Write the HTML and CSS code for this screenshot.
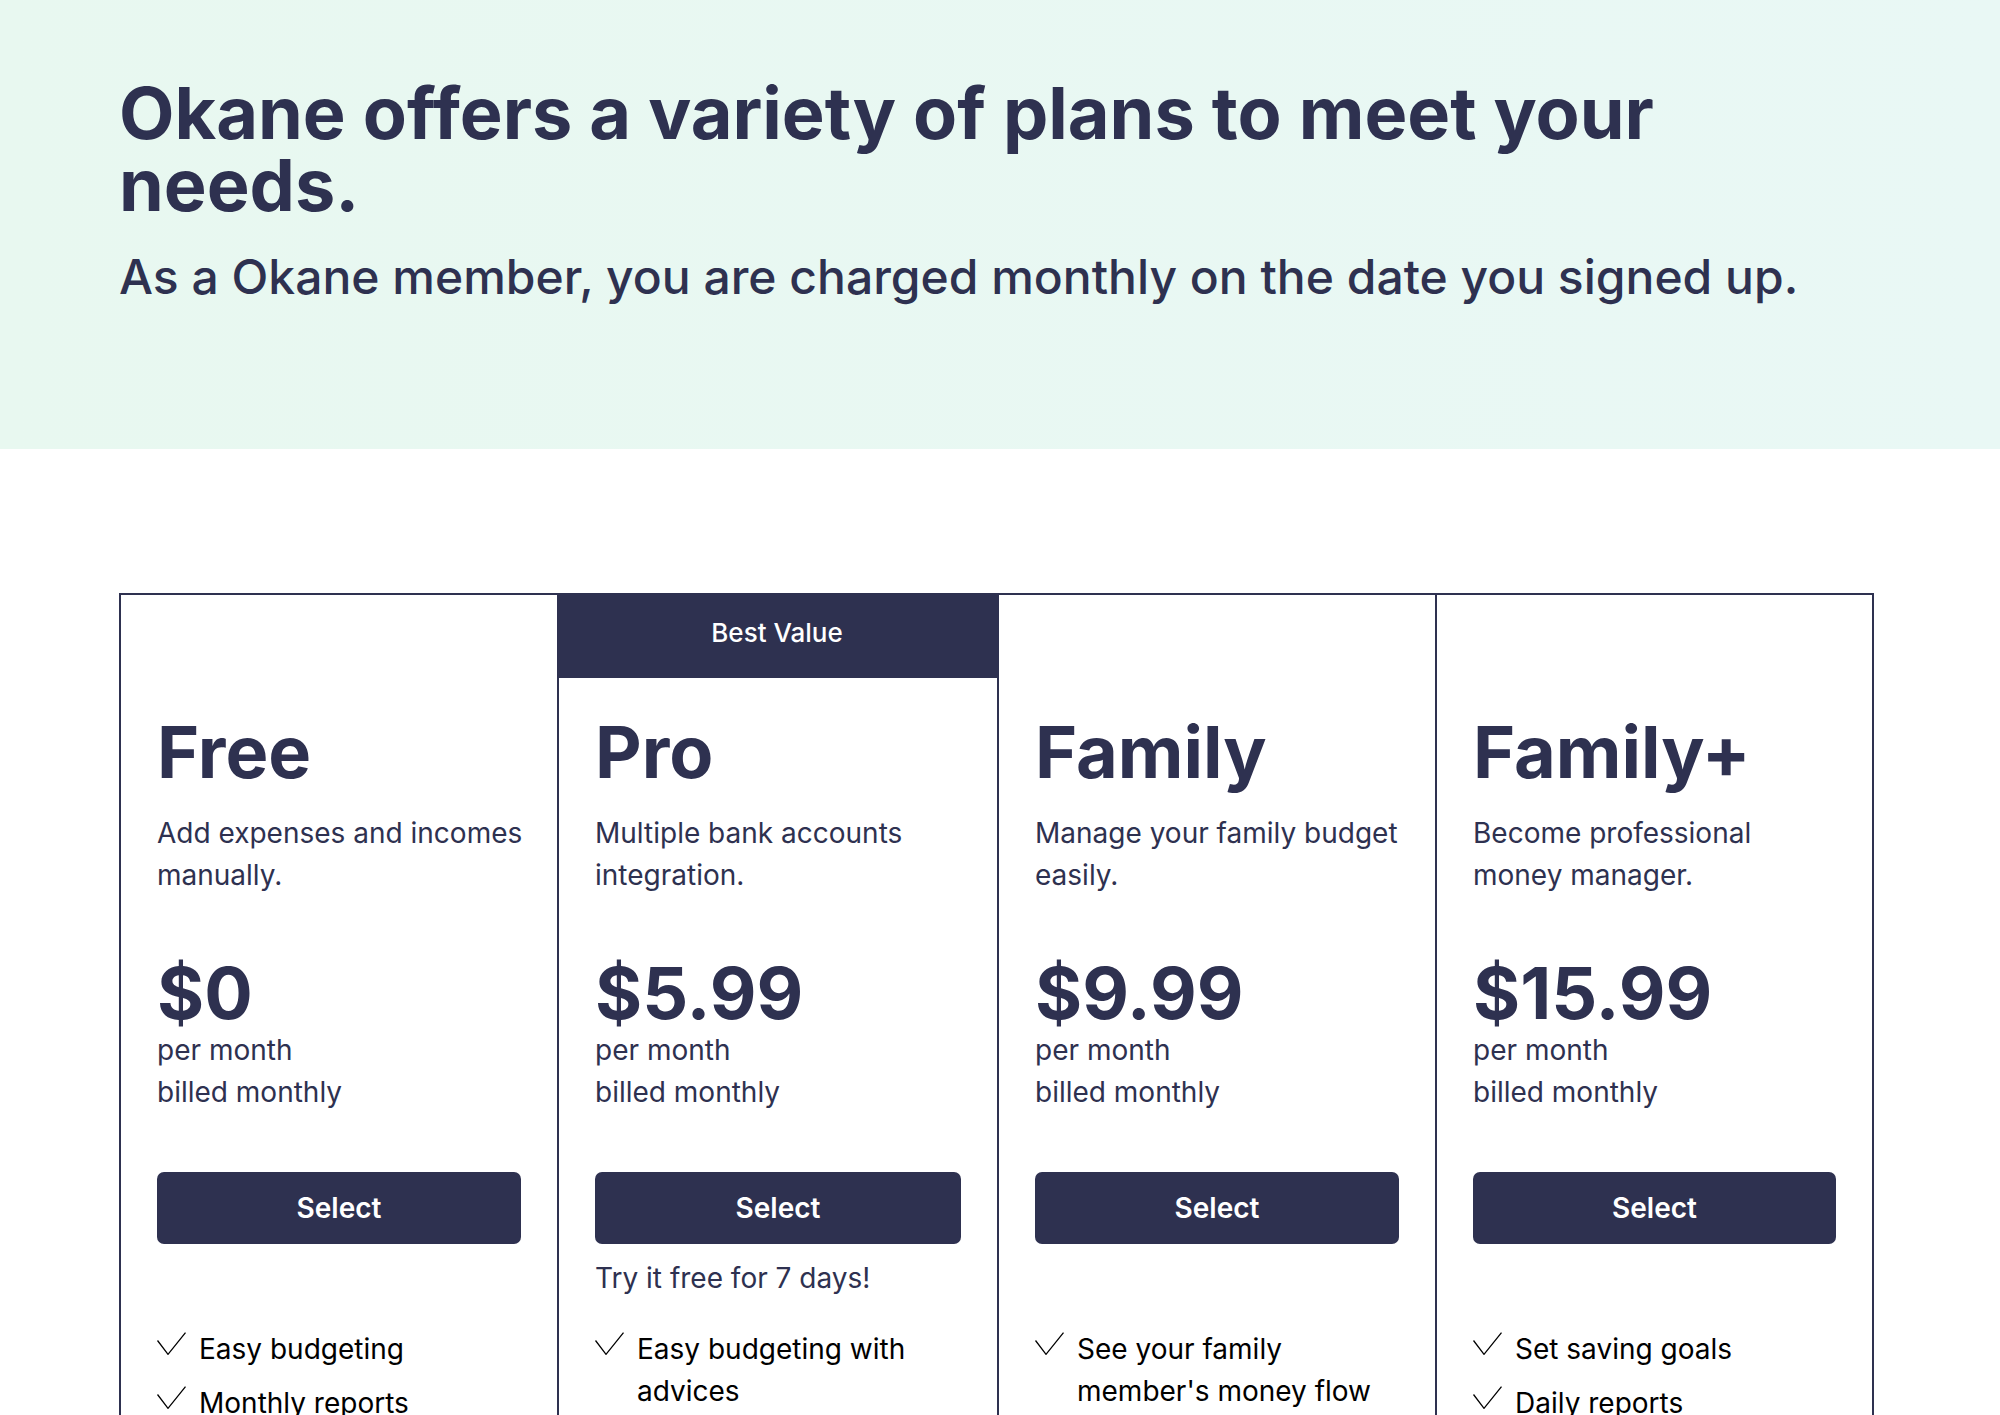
FILE: index.html
```html
<!DOCTYPE html>
<html lang="en">
<head>
<meta charset="utf-8">
<title>Okane plans</title>
<link rel="stylesheet" href="styles.css">
</head>
<body>
<header class="hero">
  <div class="container">
    <h1 class="hero-title">Okane offers a variety of plans to meet your needs.</h1>
    <p class="hero-sub">As a Okane member, you are charged monthly on the date you signed up.</p>
  </div>
</header>
<main class="plans-section">
  <div class="container">
    <div class="plans">
      <section class="plan">
        <div class="plan-badge plan-badge--empty"></div>
        <div class="plan-body">
          <h2 class="plan-name">Free</h2>
          <p class="plan-desc">Add expenses and incomes manually.</p>
          <div class="plan-price">$0</div>
          <p class="plan-period">per month<br>billed monthly</p>
          <button class="plan-btn">Select</button>
          <p class="plan-trial"></p>
          <ul class="features">
            <li class="feature"><svg class="check" width="29" height="23" viewBox="0 0 29 23"><polyline points="0.5,8.5 11,22.3 28.5,0.7" fill="none" stroke="#000" stroke-width="1.3"/></svg><span>Easy budgeting</span></li>
            <li class="feature"><svg class="check" width="29" height="23" viewBox="0 0 29 23"><polyline points="0.5,8.5 11,22.3 28.5,0.7" fill="none" stroke="#000" stroke-width="1.3"/></svg><span>Monthly reports</span></li>
          </ul>
        </div>
      </section>
      <section class="plan plan--featured">
        <div class="plan-badge">Best Value</div>
        <div class="plan-body">
          <h2 class="plan-name">Pro</h2>
          <p class="plan-desc">Multiple bank accounts integration.</p>
          <div class="plan-price">$5.99</div>
          <p class="plan-period">per month<br>billed monthly</p>
          <button class="plan-btn">Select</button>
          <p class="plan-trial">Try it free for 7 days!</p>
          <ul class="features">
            <li class="feature"><svg class="check" width="29" height="23" viewBox="0 0 29 23"><polyline points="0.5,8.5 11,22.3 28.5,0.7" fill="none" stroke="#000" stroke-width="1.3"/></svg><span>Easy budgeting with advices</span></li>
          </ul>
        </div>
      </section>
      <section class="plan">
        <div class="plan-badge plan-badge--empty"></div>
        <div class="plan-body">
          <h2 class="plan-name">Family</h2>
          <p class="plan-desc">Manage your family budget easily.</p>
          <div class="plan-price">$9.99</div>
          <p class="plan-period">per month<br>billed monthly</p>
          <button class="plan-btn">Select</button>
          <p class="plan-trial"></p>
          <ul class="features">
            <li class="feature"><svg class="check" width="29" height="23" viewBox="0 0 29 23"><polyline points="0.5,8.5 11,22.3 28.5,0.7" fill="none" stroke="#000" stroke-width="1.3"/></svg><span>See your family member's money flow</span></li>
          </ul>
        </div>
      </section>
      <section class="plan">
        <div class="plan-badge plan-badge--empty"></div>
        <div class="plan-body">
          <h2 class="plan-name">Family+</h2>
          <p class="plan-desc">Become professional money manager.</p>
          <div class="plan-price">$15.99</div>
          <p class="plan-period">per month<br>billed monthly</p>
          <button class="plan-btn">Select</button>
          <p class="plan-trial"></p>
          <ul class="features">
            <li class="feature"><svg class="check" width="29" height="23" viewBox="0 0 29 23"><polyline points="0.5,8.5 11,22.3 28.5,0.7" fill="none" stroke="#000" stroke-width="1.3"/></svg><span>Set saving goals</span></li>
            <li class="feature"><svg class="check" width="29" height="23" viewBox="0 0 29 23"><polyline points="0.5,8.5 11,22.3 28.5,0.7" fill="none" stroke="#000" stroke-width="1.3"/></svg><span>Daily reports</span></li>
          </ul>
        </div>
      </section>
    </div>
  </div>
</main>
</body>
</html>
```
FILE: styles.css
```css
* { box-sizing: border-box; }

body {
  margin: 0;
  font-family: Inter, "Noto Sans", "Liberation Sans", sans-serif;
  color: #2e3150;
  background: #ffffff;
}

.container {
  width: 1755px;
  margin-left: 119px;
}

.hero {
  height: 449px;
  padding-top: 77px;
  background: linear-gradient(90deg, #e8f8f0 0%, #e9f8f5 100%);
}

.hero-title {
  margin: 0;
  font-size: 72px;
  line-height: 72px;
  font-weight: 700;
  color: #2e3150;
}

.hero-sub {
  margin: 27px 0 0;
  font-size: 48px;
  line-height: 58px;
  font-weight: 500;
  color: #2e3150;
}

.plans-section {
  padding-top: 144px;
}

.plans {
  display: grid;
  grid-template-columns: 436fr 440fr 438fr 437fr;
  border: 2px solid #2e3150;
}

.plan + .plan {
  border-left: 2px solid #2e3150;
}

.plan-badge {
  height: 85px;
  margin-top: -2px;
  padding-top: 24px;
  background: #2e3150;
  color: #ffffff;
  text-align: center;
  font-size: 26px;
  line-height: 31px;
  font-weight: 500;
}

.plan + .plan .plan-badge {
  margin-left: -2px;
}

.plan-badge--empty {
  background: transparent;
}

.plan-body {
  padding: 38px 36px 0;
}

.plan-name {
  margin: 0;
  font-size: 72px;
  line-height: 72px;
  font-weight: 700;
  color: #2e3150;
}

.plan-desc {
  margin: 24px -3px 0 0;
  font-size: 28px;
  line-height: 42px;
  color: #2e3150;
}

.plan-price {
  margin-top: 61px;
  font-size: 72px;
  line-height: 72px;
  font-weight: 700;
  color: #2e3150;
}

.plan-period {
  margin: 0;
  font-size: 28px;
  line-height: 42px;
  color: #2e3150;
}

.plan-btn {
  display: block;
  width: 100%;
  height: 72px;
  margin-top: 59px;
  border: 0;
  border-radius: 7px;
  background: #2e3150;
  color: #ffffff;
  font-family: inherit;
  font-size: 28px;
  font-weight: 600;
}

.plan-trial {
  height: 84px;
  margin: 0;
  padding-top: 13px;
  font-size: 28px;
  line-height: 42px;
  color: #2e3150;
}

.features {
  list-style: none;
  margin: 0;
  padding: 0;
  display: flex;
  flex-direction: column;
  gap: 12px;
}

.feature {
  display: flex;
  align-items: flex-start;
  gap: 13px;
  font-size: 28px;
  line-height: 42px;
  color: #000000;
}

.check {
  flex: none;
  margin-top: 4px;
}
```
